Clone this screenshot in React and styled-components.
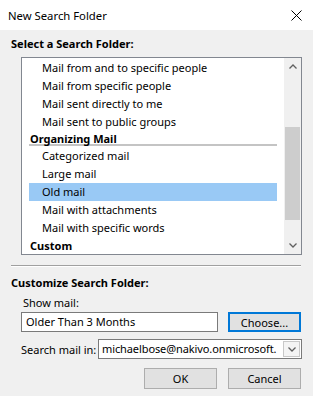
import React from 'react'
import styled, { createGlobalStyle } from 'styled-components'

const Global = createGlobalStyle`
    html, body {
        margin: 0;
        padding: 0;
        background: #f0f0f0;
    }
    * {
        box-sizing: border-box;
    }
`

const Styled = {
    Window: styled.div`
        width: 313px;
        height: 396px;
        background: #f0f0f0;
        font-family: "Noto Sans", "Open Sans", sans-serif;
        font-size: 11px;
        color: #000;
        overflow: hidden;
    `,
    TitleBar: styled.div`
        height: 30px;
        background: #ffffff;
        display: flex;
        align-items: center;
        justify-content: space-between;
        padding: 0 11px 0 8px;
    `,
    Title: styled.span`
        font-size: 11.3px;
    `,
    Body: styled.div`
        padding: 0 12px 0 11px;
        display: flex;
        flex-direction: column;
    `,
    Section: styled.div`
        font-weight: bold;
        line-height: 16px;
        margin-top: ${p => p.top}px;
    `,
    ListBox: styled.div`
        margin: 5px 0 0 10px;
        width: 281px;
        height: 198px;
        background: #ffffff;
        border: 1px solid #828790;
        display: flex;
    `,
    ListContent: styled.div`
        flex: 1;
        overflow: hidden;
        padding: 1px 7px 0 7px;
    `,
    Item: styled.div`
        height: 18px;
        line-height: 18px;
        padding-left: 13px;
        white-space: nowrap;
        background: ${p => (p.selected ? '#99c9f5' : 'transparent')};
    `,
    Group: styled.div`
        height: 15px;
        line-height: 15px;
        margin-bottom: 1px;
        padding-left: 1px;
        font-weight: bold;
        border-bottom: 2px solid #c4c4c4;
        white-space: nowrap;
    `,
    GroupLast: styled.div`
        height: 18px;
        line-height: 17px;
        padding-left: 1px;
        font-weight: bold;
    `,
    Scrollbar: styled.div`
        width: 17px;
        background: #f0f0f0;
        display: flex;
        flex-direction: column;
    `,
    ScrollArrow: styled.div`
        height: 17px;
        display: flex;
        align-items: center;
        justify-content: center;
    `,
    Track: styled.div`
        flex: 1;
        display: flex;
        flex-direction: column;
        padding: 0 1px;
    `,
    Thumb: styled.div`
        margin-top: 52px;
        height: 93px;
        background: #cdcdcd;
    `,
    Divider: styled.div`
        margin-top: 10px;
        height: 2px;
        background: #a0a0a0;
        border-bottom: 1px solid #ffffff;
    `,
    FieldLabel: styled.div`
        margin-top: 4px;
        padding-left: 12px;
        line-height: 16px;
    `,
    Row: styled.div`
        display: flex;
        align-items: center;
        margin-top: ${p => p.top}px;
        padding-left: 10px;
    `,
    TextBox: styled.div`
        width: 197px;
        height: 20px;
        background: #ffffff;
        border: 1px solid #7a7a7a;
        padding-left: 4px;
        line-height: 18px;
        white-space: nowrap;
        overflow: hidden;
    `,
    Button: styled.div`
        width: 73px;
        height: ${p => p.h || 21}px;
        background: #e1e1e1;
        border: ${p => (p.primary ? '2px solid #0078d7' : '1px solid #adadad')};
        display: flex;
        align-items: center;
        justify-content: center;
        margin-left: ${p => p.ml || 0}px;
    `,
    InlineLabel: styled.span`
        white-space: nowrap;
    `,
    Combo: styled.div`
        margin-left: auto;
        margin-right: -1px;
        width: 204px;
        height: 20px;
        background: #ffffff;
        border: 1px solid #7a7a7a;
        display: flex;
        align-items: stretch;
    `,
    ComboText: styled.div`
        flex: 1;
        overflow: hidden;
        white-space: nowrap;
        padding-left: 3px;
        line-height: 18px;
        letter-spacing: -0.1px;
    `,
    ComboDrop: styled.div`
        width: 17px;
        margin: 1px;
        background: #f4f4f4;
        border: 1px solid #c8c8c8;
        display: flex;
        align-items: center;
        justify-content: center;
    `,
    Buttons: styled.div`
        display: flex;
        justify-content: flex-end;
        gap: 11px;
        margin-top: 9px;
    `,
}

const Chevron = ({ down }) => (
    <svg width="8" height="5" viewBox="0 0 8 5">
        <path
            d={down ? 'M0.5 0.5 L4 4 L7.5 0.5' : 'M0.5 4.5 L4 1 L7.5 4.5'}
            fill="none"
            stroke="#606060"
            strokeWidth="1.3"
        />
    </svg>
)

const CloseIcon = () => (
    <svg width="11" height="11" viewBox="0 0 11 11">
        <path d="M0.5 0.5 L10.5 10.5 M10.5 0.5 L0.5 10.5" stroke="#000" strokeWidth="1" />
    </svg>
)

const senderItems = [
    'Mail from and to specific people',
    'Mail from specific people',
    'Mail sent directly to me',
    'Mail sent to public groups',
]

const organizingItems = [
    'Categorized mail',
    'Large mail',
    'Old mail',
    'Mail with attachments',
    'Mail with specific words',
]

const App = () => {
    return (
        <Styled.Window>
            <Global />
            <Styled.TitleBar>
                <Styled.Title>New Search Folder</Styled.Title>
                <CloseIcon />
            </Styled.TitleBar>
            <Styled.Body>
                <Styled.Section top={6}>Select a Search Folder:</Styled.Section>
                <Styled.ListBox>
                    <Styled.ListContent>
                        {senderItems.map(t => (
                            <Styled.Item key={t}>{t}</Styled.Item>
                        ))}
                        <Styled.Group>Organizing Mail</Styled.Group>
                        {organizingItems.map(t => (
                            <Styled.Item key={t} selected={t === 'Old mail'}>{t}</Styled.Item>
                        ))}
                        <Styled.GroupLast>Custom</Styled.GroupLast>
                    </Styled.ListContent>
                    <Styled.Scrollbar>
                        <Styled.ScrollArrow><Chevron /></Styled.ScrollArrow>
                        <Styled.Track>
                            <Styled.Thumb />
                        </Styled.Track>
                        <Styled.ScrollArrow><Chevron down /></Styled.ScrollArrow>
                    </Styled.Scrollbar>
                </Styled.ListBox>
                <Styled.Divider />
                <Styled.Section top={8}>Customize Search Folder:</Styled.Section>
                <Styled.FieldLabel>Show mail:</Styled.FieldLabel>
                <Styled.Row top={1}>
                    <Styled.TextBox>Older Than 3 Months</Styled.TextBox>
                    <Styled.Button primary h={20} ml={10}>Choose...</Styled.Button>
                </Styled.Row>
                <Styled.Row top={7}>
                    <Styled.InlineLabel>Search mail in:</Styled.InlineLabel>
                    <Styled.Combo>
                        <Styled.ComboText>michaelbose@nakivo.onmicrosoft.</Styled.ComboText>
                        <Styled.ComboDrop><Chevron down /></Styled.ComboDrop>
                    </Styled.Combo>
                </Styled.Row>
                <Styled.Buttons>
                    <Styled.Button>OK</Styled.Button>
                    <Styled.Button>Cancel</Styled.Button>
                </Styled.Buttons>
            </Styled.Body>
        </Styled.Window>
    )
}

export default App
